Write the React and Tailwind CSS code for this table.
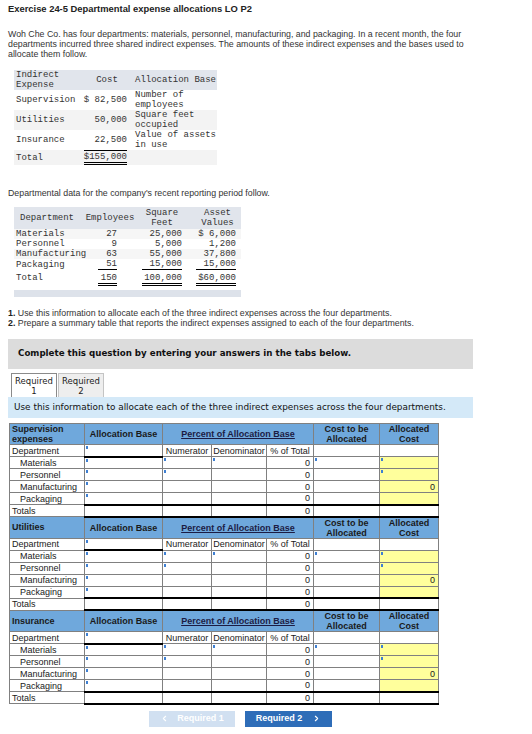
import { ChevronLeft, ChevronRight } from "lucide-react";

const depts = ["Materials", "Personnel", "Manufacturing", "Packaging"];

// little blue corner ticks on the input cells
const marks = {
  base: [true, true, true, true],
  num: [true, true, false, false],
  den: [true, false, false, false],
  cost: [true, false, false, false],
  alloc: [true, true, false, false],
};

function Mark() {
  return <span className="absolute left-[1px] top-[1px] h-[3px] w-[2px] bg-[#3f80d2]" />;
}

const b = "border border-[#808080]";

function Section({ title }) {
  return (
    <tbody>
      {/* ===== HEADER ===== */}
      <tr className="h-[21px] bg-[#6fa8dc] font-bold text-[#1a1a1a]">
        <td className={`${b} pl-[2px] leading-[10px]`}>{title}</td>
        <td className={`${b} text-center`}>Allocation Base</td>
        <td colSpan={3} className={`${b} text-center text-[#1c1c44]`}>
          <span className="underline">Percent of Allocation Base</span>
        </td>
        <td className={`${b} text-center leading-[10px]`}>
          Cost to be
          <br />
          Allocated
        </td>
        <td className={`${b} text-center leading-[10px]`}>
          Allocated
          <br />
          Cost
        </td>
      </tr>

      {/* DEPARTMENT */}
      <tr className="h-[12px]">
        <td className={`${b} pl-[2px]`}>Department</td>
        <td className={`${b} relative border-b-2 border-b-black`}>
          <Mark />
        </td>
        <td className={`${b} text-center`}>Numerator</td>
        <td className={`${b} text-center`}>Denominator</td>
        <td className={`${b} text-center`}>% of Total</td>
        <td className={b}></td>
        <td className={b}></td>
      </tr>

      {depts.map((d, i) => {
        const last = i === 3 ? "border-b-2 border-b-black" : "";
        return (
          <tr key={d} className="h-[12px]">
            <td className={`${b} pl-[10px]`}>{d}</td>
            <td className={`${b} relative ${last}`}>{marks.base[i] && <Mark />}</td>
            <td className={`${b} relative ${last}`}>{marks.num[i] && <Mark />}</td>
            <td className={`${b} relative ${last}`}>{marks.den[i] && <Mark />}</td>
            <td className={`${b} pr-[3px] text-right ${last}`}>0</td>
            <td className={`${b} relative ${last}`}>{marks.cost[i] && <Mark />}</td>
            <td className={`${b} relative bg-[#ffff9c] pr-[3px] text-right ${last}`}>
              {marks.alloc[i] && <Mark />}
              {i === 2 ? "0" : ""}
            </td>
          </tr>
        );
      })}

      {/* TOTALS */}
      <tr className="h-[12px]">
        <td className={`${b} pl-[2px]`}>Totals</td>
        <td className={`${b} border-b-2 border-b-black`}></td>
        <td className={`${b} border-b-2 border-b-black`}></td>
        <td className={`${b} border-b-2 border-b-black`}></td>
        <td className={`${b} border-b-2 border-b-black pr-[3px] text-right`}>0</td>
        <td className={`${b} border-b-2 border-b-black`}></td>
        <td className={`${b} border-b-2 border-b-black`}></td>
      </tr>
    </tbody>
  );
}

export default function App() {
  return (
    <div className="min-h-[734px] w-[532px] bg-white font-['Liberation_Sans',Arial,sans-serif] text-[#333]">
      <div className="px-[8px] pt-[3px]">
        {/* ===== TITLE ===== */}
        <h1 className="text-[9.4px] font-bold leading-[12px] text-[#222]">
          Exercise 24-5 Departmental expense allocations LO P2
        </h1>
        <p className="mt-[14px] whitespace-nowrap text-[8.8px] leading-[10px]">
          Woh Che Co. has four departments: materials, personnel, manufacturing, and packaging. In a recent month, the four
          <br />
          departments incurred three shared indirect expenses. The amounts of these indirect expenses and the bases used to
          <br />
          allocate them follow.
        </p>

        {/* ===== EXPENSE TABLE ===== */}
        <table className="ml-[6px] mt-[11px] w-[203px] table-fixed border-collapse font-['Liberation_Mono','Courier_New',monospace] text-[9px] leading-[10px] text-[#333]">
          <colgroup>
            <col className="w-[69px]" />
            <col className="w-[48px]" />
            <col className="w-[86px]" />
          </colgroup>
          <thead>
            <tr className="h-[20px] bg-[#e1e5ec]">
              <th className="pl-[2px] text-left font-normal">
                Indirect
                <br />
                Expense
              </th>
              <th className="text-center font-normal">Cost</th>
              <th className="pl-[4px] text-left font-normal whitespace-nowrap">Allocation Base</th>
            </tr>
          </thead>
          <tbody>
            <tr className="h-[20px]">
              <td className="pl-[2px]">Supervision</td>
              <td className="pr-[4px] text-right whitespace-pre">$ 82,500</td>
              <td className="pl-[4px]">
                Number of
                <br />
                employees
              </td>
            </tr>
            <tr className="h-[20px] bg-[#f3f3f3]">
              <td className="pl-[2px]">Utilities</td>
              <td className="pr-[4px] text-right">50,000</td>
              <td className="pl-[4px]">
                Square feet
                <br />
                occupied
              </td>
            </tr>
            <tr className="h-[20px]">
              <td className="pl-[2px]">Insurance</td>
              <td className="pr-[4px] text-right">22,500</td>
              <td className="pl-[4px] whitespace-nowrap">
                Value of assets
                <br />
                in use
              </td>
            </tr>
            <tr className="h-[15px] bg-[#f3f3f3]">
              <td className="pl-[2px]">Total</td>
              <td className="pr-[4px] text-right align-top">
                <span className="inline-block border-t border-b-[3px] border-double border-black pt-[2px] leading-[9px]">
                  $155,000
                </span>
              </td>
              <td></td>
            </tr>
          </tbody>
        </table>

        <p className="mt-[23px] text-[8.8px] leading-[10px]">
          Departmental data for the company's recent reporting period follow.
        </p>

        {/* ===== DEPARTMENT TABLE ===== */}
        <table className="ml-[6px] mt-[9px] w-[227px] table-fixed border-collapse font-['Liberation_Mono','Courier_New',monospace] text-[9px] leading-[10px] text-[#333]">
          <colgroup>
            <col className="w-[70px]" />
            <col className="w-[52px]" />
            <col className="w-[52px]" />
            <col className="w-[53px]" />
          </colgroup>
          <thead>
            <tr className="h-[22px] bg-[#e1e5ec]">
              <th className="pl-[6px] text-left font-normal">Department</th>
              <th className="text-center font-normal">Employees</th>
              <th className="text-center font-normal">
                Square
                <br />
                Feet
              </th>
              <th className="pl-[6px] text-center font-normal">
                Asset
                <br />
                Values
              </th>
            </tr>
          </thead>
          <tbody>
            <tr className="h-[10px] bg-[#f6f6f6]">
              <td className="pl-[2px] whitespace-nowrap">Materials</td>
              <td className="pr-[19px] text-right">27</td>
              <td className="pr-[6px] text-right">25,000</td>
              <td className="pr-[5px] text-right whitespace-pre">$ 6,000</td>
            </tr>
            <tr className="h-[10px]">
              <td className="pl-[2px] whitespace-nowrap">Personnel</td>
              <td className="pr-[19px] text-right">9</td>
              <td className="pr-[6px] text-right">5,000</td>
              <td className="pr-[5px] text-right">1,200</td>
            </tr>
            <tr className="h-[10px] bg-[#f6f6f6]">
              <td className="pl-[2px] whitespace-nowrap">Manufacturing</td>
              <td className="pr-[19px] text-right">63</td>
              <td className="pr-[6px] text-right">55,000</td>
              <td className="pr-[5px] text-right">37,800</td>
            </tr>
            <tr className="h-[11px]">
              <td className="pl-[2px] whitespace-nowrap">Packaging</td>
              <td className="pr-[19px] text-right">
                <span className="inline-block w-[19px] border-b border-black">51</span>
              </td>
              <td className="pr-[6px] text-right">
                <span className="inline-block w-[40px] border-b border-black">15,000</span>
              </td>
              <td className="pr-[5px] text-right">
                <span className="inline-block w-[40px] border-b border-black">15,000</span>
              </td>
            </tr>
            <tr className="h-[20px] align-top">
              <td className="pl-[2px] pt-[3px]">Total</td>
              <td className="pr-[19px] pt-[3px] text-right">
                <span className="inline-block w-[19px] border-b-[3px] border-double border-black">150</span>
              </td>
              <td className="pr-[6px] pt-[3px] text-right">
                <span className="inline-block w-[40px] border-b-[3px] border-double border-black">100,000</span>
              </td>
              <td className="pr-[5px] pt-[3px] text-right">
                <span className="inline-block w-[40px] border-b-[3px] border-double border-black">$60,000</span>
              </td>
            </tr>
            <tr className="h-[7px] bg-[#dde2ea]">
              <td colSpan={4}></td>
            </tr>
          </tbody>
        </table>

        {/* ===== REQUIREMENTS ===== */}
        <div className="mt-[11px] whitespace-nowrap text-[8.8px] leading-[10px]">
          <p>
            <b className="text-[#222]">1.</b> Use this information to allocate each of the three indirect expenses across the four departments.
          </p>
          <p>
            <b className="text-[#222]">2.</b> Prepare a summary table that reports the indirect expenses assigned to each of the four departments.
          </p>
        </div>

        <div className="mt-[11px] flex h-[30px] w-[465px] items-center bg-[#dcdcdc] pl-[10px] font-['DejaVu_Sans',Verdana,sans-serif] text-[8.7px] font-bold text-[#111]">
          Complete this question by entering your answers in the tabs below.
        </div>

        {/* ===== TABS ===== */}
        <div className="mt-[4px] flex gap-[1px] pl-[3px] font-['DejaVu_Sans',Verdana,sans-serif] text-[8.5px] leading-[10px] text-[#222]">
          <div className="flex h-[24px] w-[46px] flex-col items-center justify-center border border-b-0 border-[#8a8a8a] bg-white">
            <span>Required</span>
            <span>1</span>
          </div>
          <div className="flex h-[24px] w-[46px] flex-col items-center justify-center border border-b-0 border-[#c4c4c4] bg-[#eeeeee]">
            <span>Required</span>
            <span>2</span>
          </div>
        </div>
        <div className="flex h-[21px] w-[465px] items-center bg-[#d4e9f8] pl-[6px] font-['DejaVu_Sans',Verdana,sans-serif] text-[8.9px] text-[#111]">
          Use this information to allocate each of the three indirect expenses across the four departments.
        </div>

        {/* ===== ALLOCATION TABLE ===== */}
        <table className="ml-[1px] mt-[5px] w-[429px] table-fixed border-collapse text-[9px] leading-[10px] text-[#1a1a1a]">
          <colgroup>
            <col className="w-[75px]" />
            <col className="w-[78px]" />
            <col className="w-[49px]" />
            <col className="w-[55px]" />
            <col className="w-[47px]" />
            <col className="w-[66px]" />
            <col className="w-[59px]" />
          </colgroup>
          <Section
            title={
              <>
                Supervision
                <br />
                expenses
              </>
            }
          />
          <Section title="Utilities" />
          <Section title="Insurance" />
        </table>

        {/* ===== NAV BUTTONS ===== */}
        <div className="mt-[6px] flex w-[465px] justify-center gap-[10px]">
          <button className="flex h-[16px] w-[86px] items-center justify-center gap-[8px] bg-[#d1e0f1] text-[9px] font-bold text-white">
            <ChevronLeft size={9} strokeWidth={3} />
            Required 1
          </button>
          <button className="flex h-[16px] w-[87px] items-center justify-center gap-[10px] bg-[#2e6db8] text-[9px] font-bold text-white">
            Required 2
            <ChevronRight size={9} strokeWidth={3} />
          </button>
        </div>
      </div>
    </div>
  );
}
